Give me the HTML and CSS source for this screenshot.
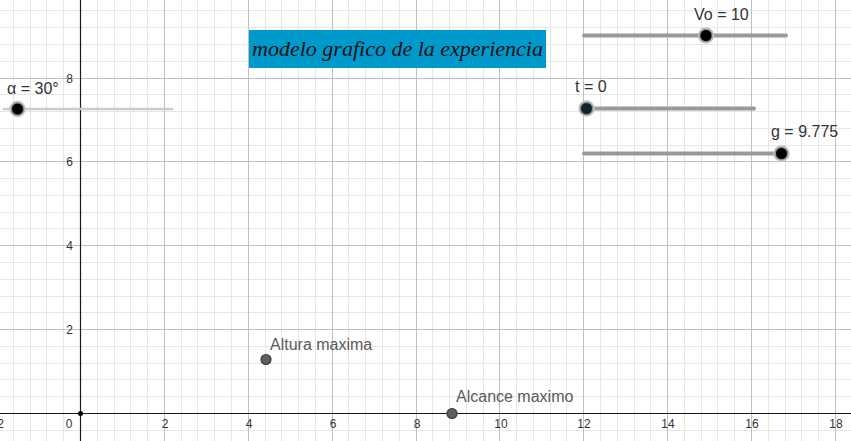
FILE: index.html
```html
<!DOCTYPE html>
<html>
	<head>
		<meta name="viewport" content="width=device-width, initial-scale=1.0">
		<title>modelo grafico de la experiencia</title>
		<link rel="stylesheet" href="styles.css">
	</head>
	<body>
	<div class="graphics_view">
		<svg class="board" width="851" height="441" viewBox="0 0 851 441">
			<!-- grid -->
			<path class="grid_minor" d="M13.5 0V441M30.5 0V441M46.5 0V441M63.5 0V441M97.5 0V441M114.5 0V441M130.5 0V441M147.5 0V441M181.5 0V441M197.5 0V441M214.5 0V441M231.5 0V441M265.5 0V441M281.5 0V441M298.5 0V441M315.5 0V441M348.5 0V441M365.5 0V441M382.5 0V441M399.5 0V441M432.5 0V441M449.5 0V441M466.5 0V441M483.5 0V441M516.5 0V441M533.5 0V441M550.5 0V441M566.5 0V441M600.5 0V441M617.5 0V441M634.5 0V441M650.5 0V441M684.5 0V441M701.5 0V441M717.5 0V441M734.5 0V441M768.5 0V441M785.5 0V441M801.5 0V441M818.5 0V441
				M0 430.5H851M0 396.5H851M0 379.5H851M0 363.5H851M0 346.5H851M0 312.5H851M0 296.5H851M0 279.5H851M0 262.5H851M0 228.5H851M0 212.5H851M0 195.5H851M0 178.5H851M0 145.5H851M0 128.5H851M0 111.5H851M0 94.5H851M0 61.5H851M0 44.5H851M0 27.5H851M0 10.5H851"/>
			<path class="grid_major" d="M164.5 0V441M248.5 0V441M332.5 0V441M416.5 0V441M499.5 0V441M583.5 0V441M667.5 0V441M751.5 0V441M835.5 0V441
				M0 329.5H851M0 245.5H851M0 161.5H851M0 78.5H851"/>
			<!-- axes -->
			<path class="axis" d="M80.5 0V441M0 413.5H851"/>
			<g class="tick_x">
				<text x="-3">−2</text>
				<text x="165">2</text>
				<text x="249">4</text>
				<text x="333">6</text>
				<text x="417">8</text>
				<text x="501">10</text>
				<text x="584">12</text>
				<text x="668">14</text>
				<text x="752">16</text>
				<text x="836">18</text>
			</g>
			<text class="tick_zero" x="69" y="428">0</text>
			<g class="tick_y">
				<text y="83">8</text>
				<text y="166">6</text>
				<text y="250">4</text>
				<text y="334">2</text>
			</g>
			<circle class="origin" cx="80.5" cy="413.5" r="2.5"/>

			<!-- sliders -->
			<line class="slider_line light" x1="4" y1="109" x2="172" y2="109"/>
			<circle class="knob_ring" cx="17.5" cy="109" r="7.5"/>
			<circle class="knob" cx="17.5" cy="109" r="5.5"/>
			<text class="slider_label" x="7" y="94">α = 30°</text>

			<line class="slider_line" x1="584" y1="35.5" x2="786" y2="35.5"/>
			<circle class="knob_ring" cx="706" cy="35.5" r="7.5"/>
			<circle class="knob" cx="706" cy="35.5" r="5.5"/>
			<text class="slider_label" x="694" y="20">Vo = 10</text>

			<line class="slider_line" x1="586" y1="108.5" x2="754" y2="108.5"/>
			<circle class="knob_ring" cx="586.5" cy="108.5" r="7.5"/>
			<circle class="knob dark" cx="586.5" cy="108.5" r="5.5"/>
			<text class="slider_label" x="575" y="92">t = 0</text>

			<line class="slider_line" x1="584" y1="153.5" x2="781" y2="153.5"/>
			<circle class="knob_ring" cx="781.5" cy="153.5" r="7.5"/>
			<circle class="knob" cx="781.5" cy="153.5" r="5.5"/>
			<text class="slider_label" x="771" y="137">g = 9.775</text>

			<!-- points -->
			<circle class="point" cx="266" cy="359.5" r="5"/>
			<text class="point_label" x="270" y="350">Altura maxima</text>
			<circle class="point" cx="452" cy="413.5" r="5"/>
			<text class="point_label" x="456" y="402">Alcance maximo</text>
		</svg>
		<div class="title_box">modelo grafico de la experiencia</div>
	</div>
	</body>
</html>
```

FILE: styles.css
```css
	body
	{
		margin: 0;
		background: white;
		overflow: hidden;
	}
	.graphics_view
	{
		position: relative;
		width: 851px;
		height: 441px;
		font-family: 'Liberation Sans', Arial, sans-serif;
	}
	.board
	{
		display: block;
	}
	.grid_minor
	{
		stroke: #e6e6e6;
		stroke-width: 1;
		fill: none;
	}
	.grid_major
	{
		stroke: #c0c0c0;
		stroke-width: 1;
		fill: none;
	}
	.axis
	{
		stroke: #1a1a1a;
		stroke-width: 1.2;
		fill: none;
	}
	.origin
	{
		fill: #000;
	}
	.tick_x text
	{
		font-size: 12px;
		fill: #333;
		text-anchor: middle;
		transform: translateY(428px);
	}
	.tick_zero
	{
		font-size: 12px;
		fill: #333;
		text-anchor: middle;
	}
	.tick_y text
	{
		font-size: 12px;
		fill: #333;
		text-anchor: end;
		transform: translateX(73px);
	}
	.slider_line
	{
		stroke: #999;
		stroke-width: 4;
		stroke-linecap: round;
	}
	.slider_line.light
	{
		stroke: #cbcbcb;
		stroke-width: 2.5;
	}
	.knob_ring
	{
		fill: #8a8a8a;
		stroke: #c4c4c4;
		stroke-width: 1.5;
	}
	.knob
	{
		fill: #000;
	}
	.knob.dark
	{
		fill: #10222b;
	}
	.slider_label
	{
		font-size: 16px;
		fill: #333;
	}
	.point
	{
		fill: #5f5f5f;
		stroke: #3a3a3a;
		stroke-width: 1.2;
	}
	.point_label
	{
		font-size: 16px;
		fill: #5a5a5a;
	}
	.title_box
	{
		position: absolute;
		left: 249px;
		top: 30px;
		width: 297px;
		height: 38px;
		background-color: #0099cc;
		color: #111;
		font-family: 'Liberation Serif', 'Times New Roman', serif;
		font-style: italic;
		font-size: 22px;
		display: flex;
		align-items: center;
		justify-content: center;
		white-space: nowrap;
	}
```
